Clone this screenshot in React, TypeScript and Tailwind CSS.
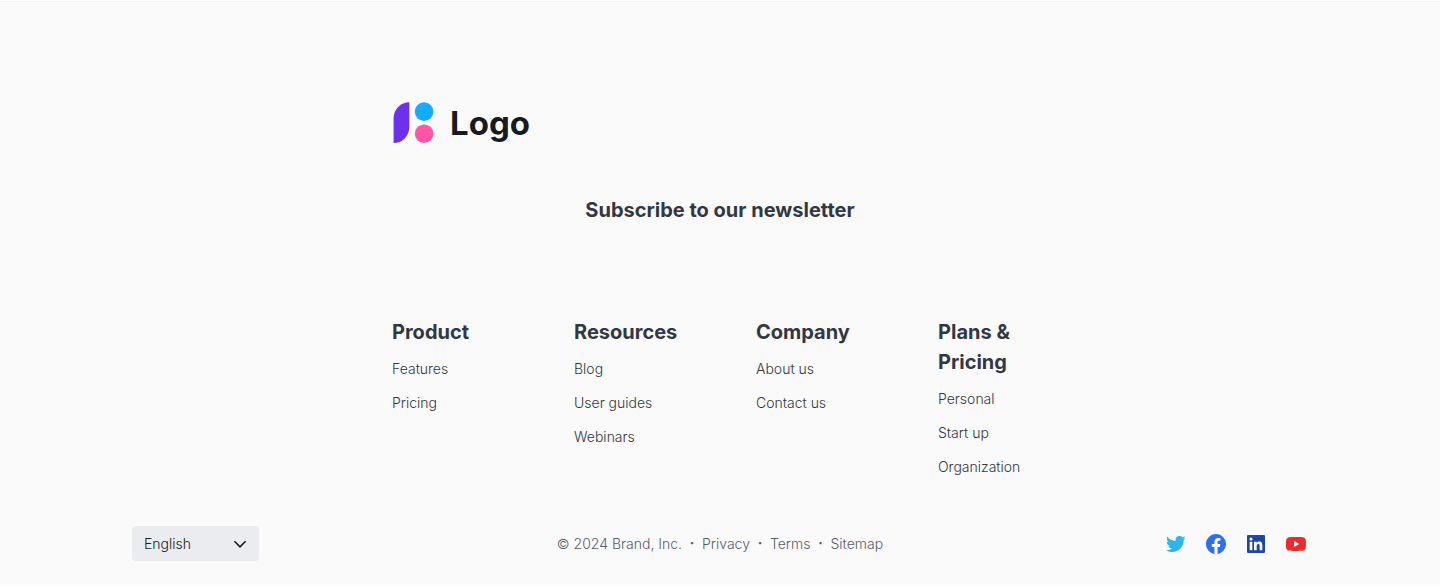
import {
  BiLogoFacebookCircle,
  BiLogoLinkedinSquare,
  BiLogoTwitter,
  BiLogoYoutube,
} from "react-icons/bi";

const columns = [
  { title: "Product", links: ["Features", "Pricing"] },
  { title: "Resources", links: ["Blog", "User guides", "Webinars"] },
  { title: "Company", links: ["About us", "Contact us"] },
  { title: "Plans & Pricing", links: ["Personal", "Start up", "Organization"] },
];

const socials = [
  { name: "Twitter", Icon: BiLogoTwitter, color: "text-[#2eb6ea]" },
  { name: "Facebook", Icon: BiLogoFacebookCircle, color: "text-[#2f6fed]" },
  { name: "LinkedIn", Icon: BiLogoLinkedinSquare, color: "text-[#1e46a8]" },
  { name: "YouTube", Icon: BiLogoYoutube, color: "text-[#ea2c2f]" },
];

function Logo() {
  return (
    <a href="#" className="flex w-fit items-center gap-4 text-[#171a1f]">
      <svg viewBox="0 0 42 42" className="size-[42px]" aria-hidden="true">
        <path d="M17.3 0.3V25.3A15.7 15.7 0 0 1 1.6 41V16A15.7 15.7 0 0 1 17.3 0.3Z" fill="#6d31ed" />
        <circle cx="32.1" cy="9.6" r="9.3" fill="#15abff" />
        <circle cx="32.1" cy="31.7" r="9.3" fill="#ff56a5" />
      </svg>
      <span className="text-[33px] leading-[42px] font-bold">Logo</span>
    </a>
  );
}

export default function App() {
  return (
    <div className="bg-white pt-px">
      <footer className="border-t border-[#f3f4f6] bg-[#fafafb] px-6 pt-[100px] pb-6 font-['Inter','Liberation_Sans',sans-serif] text-sm font-light text-[#323743]">
        <div className="mx-auto max-w-[656px]">
          <Logo />
          <h2 className="mt-[51px] text-center text-xl leading-[30px] font-bold">
            Subscribe to our newsletter
          </h2>
          <div className="mt-[92px] grid grid-cols-2 gap-[72px] sm:grid-cols-4">
            {columns.map(({ title, links }) => (
              <nav key={title} aria-label={title}>
                <h3 className="text-xl leading-[30px] font-bold">{title}</h3>
                <ul className="mt-[11px] flex flex-col gap-3">
                  {links.map((link) => (
                    <li key={link} className="leading-[22px]">
                      <a href="#">{link}</a>
                    </li>
                  ))}
                </ul>
              </nav>
            ))}
          </div>
        </div>

        <div className="mx-auto mt-12 grid max-w-[1176px] items-center gap-4 md:grid-cols-[1fr_auto_1fr]">
          <div className="grid w-[127px] items-center">
            <select
              aria-label="Language"
              className="col-start-1 row-start-1 h-[35px] appearance-none rounded bg-[#ebecf0] pr-8 pl-3 text-sm text-[#171a1f]"
            >
              <option>English</option>
            </select>
            <svg
              viewBox="0 0 16 16"
              className="pointer-events-none col-start-1 row-start-1 mr-[11px] size-4 justify-self-end"
              fill="none"
              stroke="#171a1f"
              strokeWidth="1.6"
              aria-hidden="true"
            >
              <path d="M2.4 5.2L8 10.8L13.6 5.2" />
            </svg>
          </div>
          <ul className="flex items-center text-[#565d6d]">
            <li>© 2024 Brand, Inc.</li>
            {["Privacy", "Terms", "Sitemap"].map((link) => (
              <li key={link} className="flex items-center">
                <span className="w-5 text-center text-[9px]">•</span>
                <a href="#">{link}</a>
              </li>
            ))}
          </ul>
          <ul className="flex gap-4 justify-self-end">
            {socials.map(({ name, Icon, color }) => (
              <li key={name}>
                <a href="#" aria-label={name}>
                  <Icon className={`size-6 ${color}`} />
                </a>
              </li>
            ))}
          </ul>
        </div>
      </footer>
    </div>
  );
}
